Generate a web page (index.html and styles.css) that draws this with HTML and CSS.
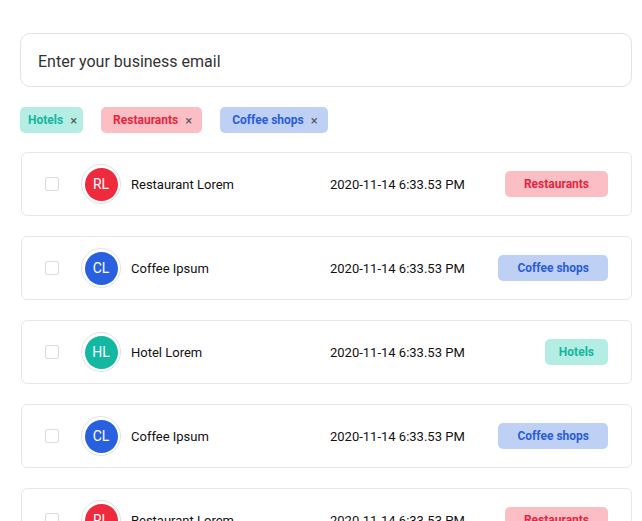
FILE: index.html
```html
<!DOCTYPE html>
<html>
<head>
<meta charset="utf-8">
<link rel="stylesheet" href="styles.css">
</head>
<body>
<div class="page">
  <div class="email-input">Enter your business email</div>
  <div class="chips">
    <span class="chip chip-hotel">Hotels <span class="x">×</span></span>
    <span class="chip chip-rest">Restaurants <span class="x">×</span></span>
    <span class="chip chip-coffee">Coffee shops <span class="x">×</span></span>
  </div>
  <div class="list">
    <div class="card">
      <span class="check"></span>
      <span class="avatar av-rest"><span>RL</span></span>
      <span class="name">Restaurant Lorem</span>
      <span class="date">2020-11-14 6:33.53 PM</span>
      <span class="tagcol"><span class="tag tag-rest">Restaurants</span></span>
    </div>
    <div class="card">
      <span class="check"></span>
      <span class="avatar av-coffee"><span>CL</span></span>
      <span class="name">Coffee Ipsum</span>
      <span class="date">2020-11-14 6:33.53 PM</span>
      <span class="tagcol"><span class="tag tag-coffee">Coffee shops</span></span>
    </div>
    <div class="card">
      <span class="check"></span>
      <span class="avatar av-hotel"><span>HL</span></span>
      <span class="name">Hotel Lorem</span>
      <span class="date">2020-11-14 6:33.53 PM</span>
      <span class="tagcol"><span class="tag tag-hotel">Hotels</span></span>
    </div>
    <div class="card">
      <span class="check"></span>
      <span class="avatar av-coffee"><span>CL</span></span>
      <span class="name">Coffee Ipsum</span>
      <span class="date">2020-11-14 6:33.53 PM</span>
      <span class="tagcol"><span class="tag tag-coffee">Coffee shops</span></span>
    </div>
    <div class="card">
      <span class="check"></span>
      <span class="avatar av-rest"><span>RL</span></span>
      <span class="name">Restaurant Lorem</span>
      <span class="date">2020-11-14 6:33.53 PM</span>
      <span class="tagcol"><span class="tag tag-rest">Restaurants</span></span>
    </div>
  </div>
</div>
</body>
</html>
```

FILE: styles.css
```css
html, body {
  margin: 0;
  padding: 0;
  background: #ffffff;
  overflow: hidden;
}
body {
  font-family: Roboto, "Liberation Sans", sans-serif;
  color: #111;
}
.page {
  padding: 33px 10px 0 20px;
}
.email-input {
  box-sizing: border-box;
  width: 612px;
  height: 54px;
  border: 1px solid #e3e3e3;
  border-radius: 10px;
  padding: 2px 17px 0;
  display: flex;
  align-items: center;
  font-size: 16px;
  color: #333;
}
.chips {
  display: flex;
  gap: 18px;
  margin-top: 20px;
}
.chip {
  display: inline-flex;
  align-items: center;
  height: 26px;
  padding: 0 10px 0 12px;
  border-radius: 5px;
  font-size: 12px;
  font-weight: 700;
}
.chip .x {
  font-weight: 400;
  color: #555;
  margin-left: 7px;
  font-size: 13px;
}
.chip-hotel { background: #b3ede4; color: #16b59e; padding-left: 8px; padding-right: 6px; }
.chip-rest { background: #fbbec4; color: #e6263e; }
.chip-coffee { background: #bfd0f5; color: #2a5cd8; }
.list {
  margin-top: 19px;
  margin-left: 1px;
  display: flex;
  flex-direction: column;
  gap: 20px;
}
.card {
  box-sizing: border-box;
  width: 611px;
  height: 64px;
  flex: none;
  border: 1px solid #e6e6e6;
  border-radius: 6px;
  padding: 0 23px;
  display: flex;
  align-items: center;
}
.check {
  box-sizing: border-box;
  width: 14px;
  height: 14px;
  border: 1px solid #dcdcdc;
  border-radius: 2px;
  flex: none;
}
.avatar {
  box-sizing: border-box;
  width: 40px;
  height: 40px;
  border-radius: 50%;
  border: 1px solid #e2e2e2;
  margin-left: 22px;
  display: flex;
  align-items: center;
  justify-content: center;
  flex: none;
}
.avatar span {
  width: 33px;
  height: 33px;
  border-radius: 50%;
  display: flex;
  align-items: center;
  justify-content: center;
  color: #fff;
  font-size: 14px;
}
.av-rest span { background: #ee2a3c; }
.av-coffee span { background: #2860e0; }
.av-hotel span { background: #14b8a0; }
.name {
  margin-left: 10px;
  flex: 1;
  font-size: 13px;
  color: #111;
}
.date {
  width: 168px;
  font-size: 13px;
  color: #111;
}
.tagcol {
  width: 110px;
  display: flex;
  justify-content: flex-end;
}
.tag {
  display: inline-flex;
  align-items: center;
  justify-content: center;
  height: 26px;
  padding: 0 19px;
  border-radius: 5px;
  font-size: 12px;
  font-weight: 700;
}
.tag-rest { background: #fbbec4; color: #e6263e; }
.tag-coffee { background: #bfd0f5; color: #2a5cd8; }
.tag-hotel { background: #b3ede4; color: #16b59e; padding: 0 14px; }
```
